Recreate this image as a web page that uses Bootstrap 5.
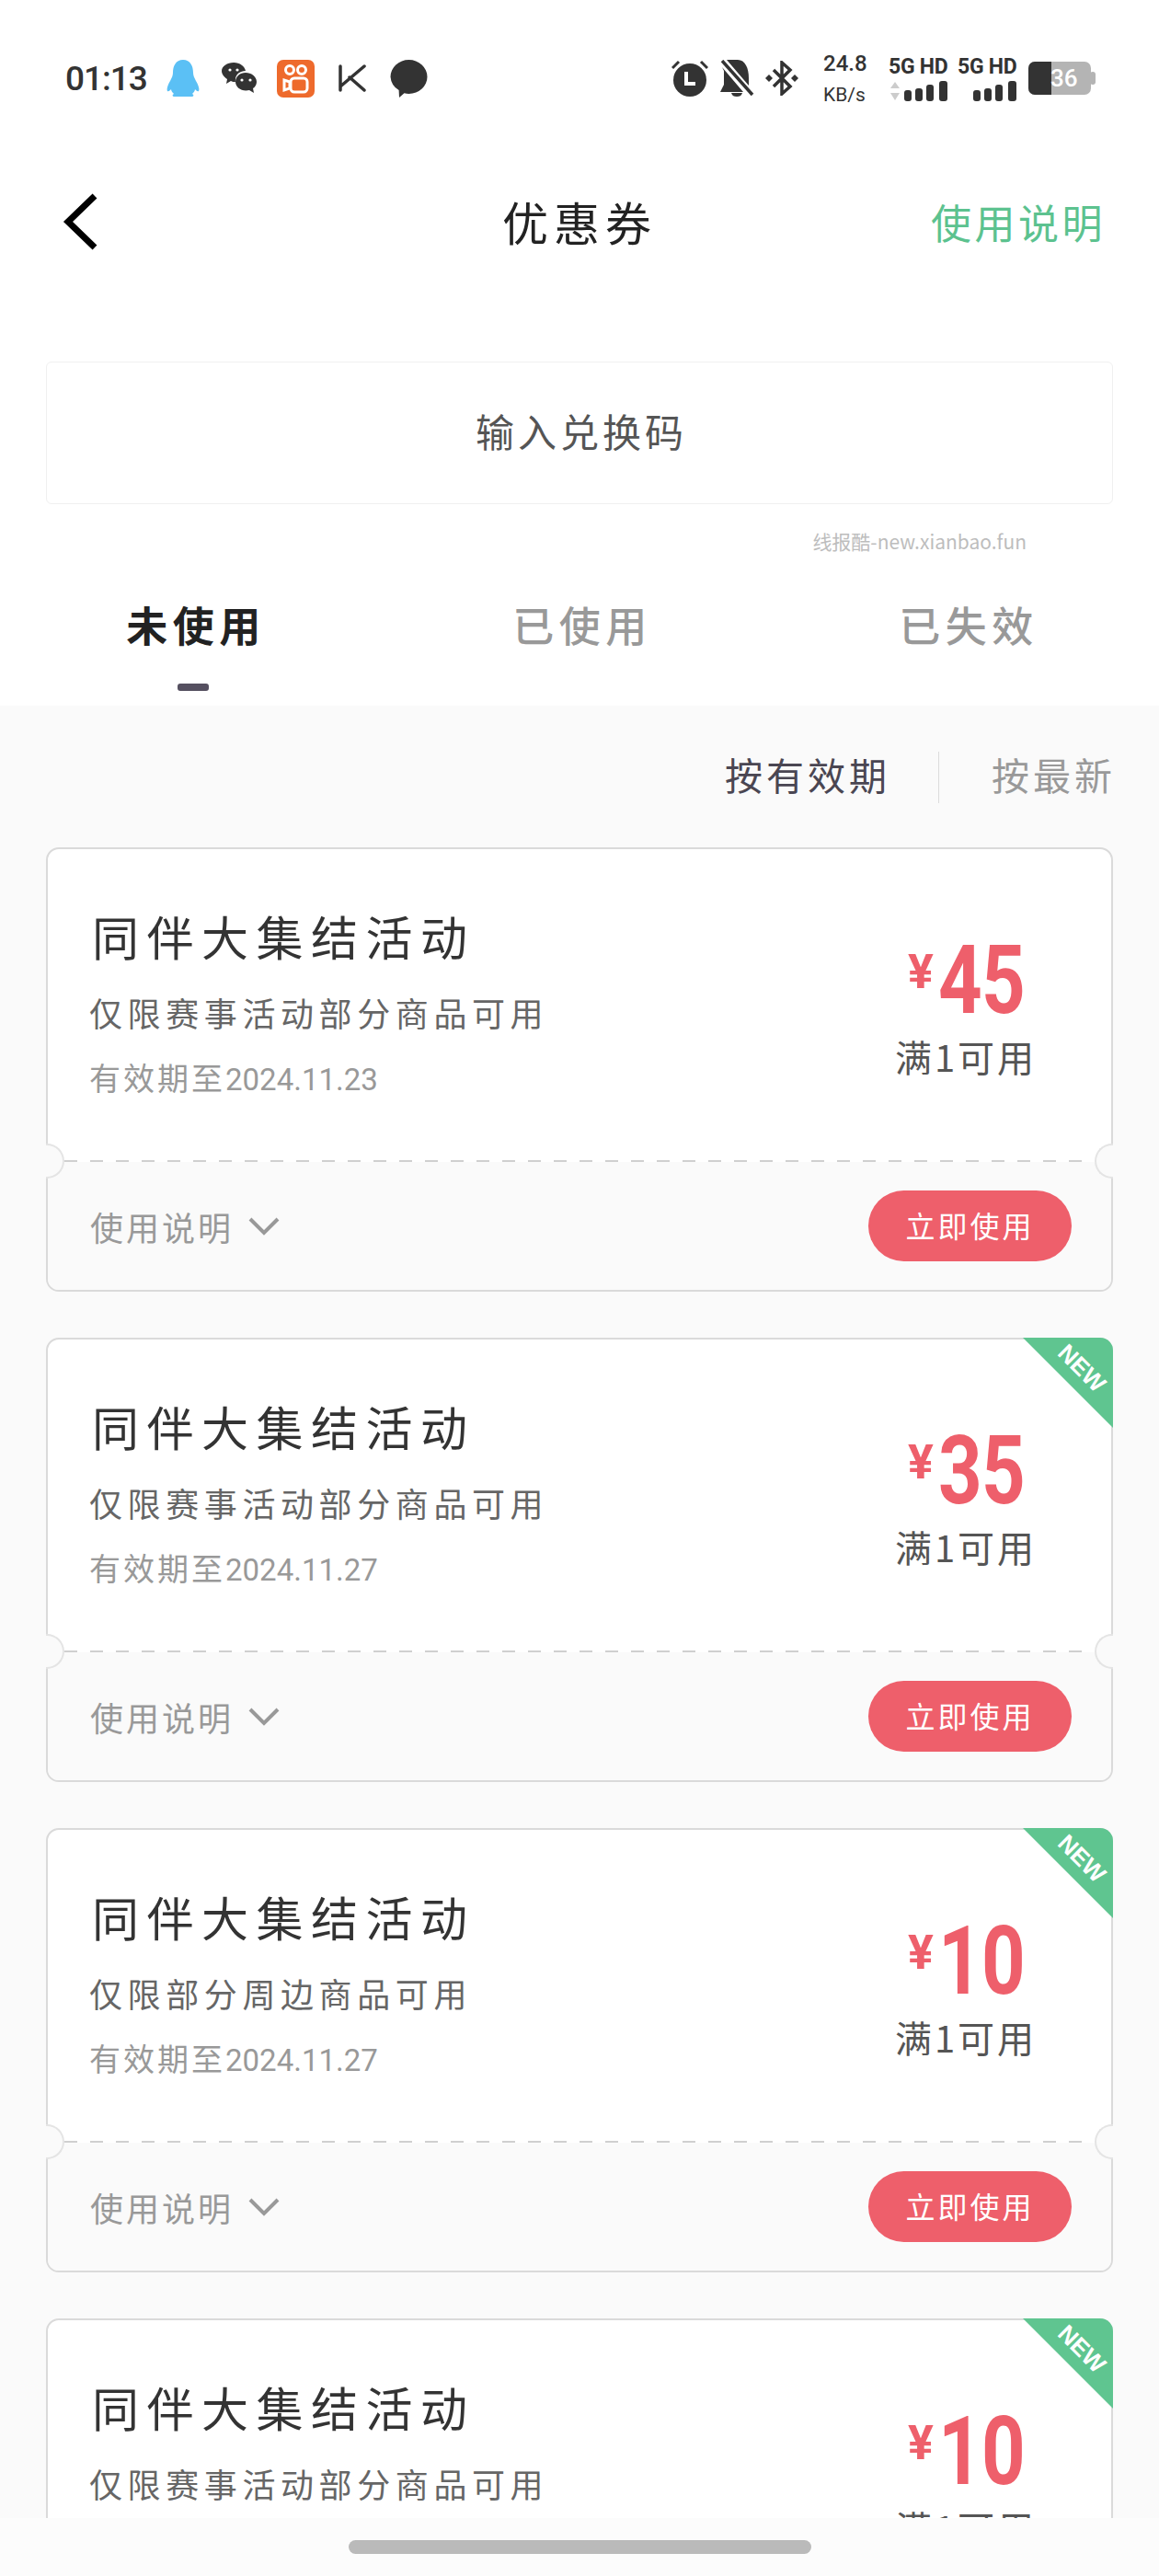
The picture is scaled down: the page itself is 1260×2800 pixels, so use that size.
<!DOCTYPE html>
<html lang="zh-CN">

<head>
    <meta charset="UTF-8">
    <meta name="viewport" content="width=device-width, initial-scale=1.0">
    <title>优惠券</title>
    <link href="https://cdn.jsdelivr.net/npm/bootstrap@5.3.3/dist/css/bootstrap.min.css" rel="stylesheet">
    <style>
        body {
            width: 1260px;
            height: 2800px;
            overflow: hidden;
            background: #fff;
            font-family: "Noto Sans CJK SC", "Noto Sans", sans-serif;
            color: #333;
        }

        /* status bar */
        .status-bar { height: 170px; padding: 0 69px 0 71px; color: #333; }
        .status-time { font: 500 37px/1 Roboto, sans-serif; letter-spacing: -1px; width: 110px; }
        .speed { width: 50px; font-family: Roboto, sans-serif; line-height: 1; }
        .speed-num { font-size: 24px; font-weight: 500; }
        .speed-unit { font-size: 21px; margin-top: 12px; }
        .net { width: 65px; margin-right: 10px; }
        .net-label { font: 700 23px/1 Roboto, sans-serif; white-space: nowrap; letter-spacing: -.3px; }
        .battery { position: relative; width: 73px; height: 36px; }
        .battery-num { position: absolute; left: 24px; top: 4px; color: #fff; font: 500 26px/28px Roboto, sans-serif; }

        /* header */
        .top-nav { height: 120px; margin-top: 13px; padding: 0 58px 4px 68px; position: relative; }
        .nav-title { position: absolute; left: 0; right: 0; top: 27px; text-align: center; font-size: 50px; line-height: 60px; letter-spacing: 6px; color: #222; }
        .nav-help { font-size: 44px; letter-spacing: 3.500px; color: #5cc28f; }

        .code-box { height: 155px; margin: 90px 50px 0; padding: 0 0 6px 4px; border: 1px solid #f0f0f0; border-radius: 6px; font-size: 42px; letter-spacing: 4px; color: #555; }
        .watermark { margin: 25px 144px 0 0; text-align: right; font-size: 21px; line-height: 30px; color: #bdbdbd; }

        .tabs-row { margin-top: 46px; padding-bottom: 16px; }
        .tab-item { padding-left: 6px; font-size: 45px; line-height: 60px; letter-spacing: 5.500px; font-weight: 500; color: #999; }
        .tab-active { color: #222; font-weight: 700; }
        .tab-bar { width: 34px; height: 8px; margin: 34px auto 0; border-radius: 3px; background: #555060; }

        /* list */
        .list-area { height: 1970px; overflow: hidden; background: #fafafa; padding: 50px 50px 0; }
        .sort-row { height: 56px; margin-bottom: 48px; font-size: 41px; letter-spacing: 4px; }
        .sort-row span { position: relative; top: -3px; }
        .sort-on { color: #4a4652; }
        .sort-off { color: #999; margin-right: -3px; }
        .sort-row .sort-line { top: 0; width: 1px; height: 56px; margin: 0 57px 0 52px; background: #dcdcdc; }

        .coupon { position: relative; height: 483px; margin-bottom: 50px; background: #fff; border: 2px solid #dadada; border-radius: 14px; }
        .coupon-top { height: 340px; padding-right: 33px; }
        .coupon-info { padding: 64px 0 0 48px; }
        .coupon-name { font-size: 51px; line-height: 60px; letter-spacing: 8.500px; color: #333; }
        .coupon-scope { margin: 28px 0 0 -3px; font-size: 36px; line-height: 50px; letter-spacing: 5.600px; color: #666; }
        .coupon-date { margin: 21px 0 0 -3px; font-size: 34px; line-height: 50px; letter-spacing: 3px; color: #999; }
        .coupon-date b { font: 400 33px/50px Roboto, sans-serif; letter-spacing: 0; }
        .coupon-price { width: 250px; padding-top: 98px; text-align: center; }
        .price-num { font: 700 52px/90px Roboto, sans-serif; color: #ee5f6b; }
        .price-sign { position: relative; top: -27px; margin-right: 5px; }
        /* the digits in the picture are tall and narrow */
        .price-digits { display: inline-block; margin-right: -24px; font-size: 104px; letter-spacing: -1px; transform: scaleX(.8); transform-origin: left center; }
        .price-cond { margin-top: -6px; font-size: 40px; line-height: 50px; letter-spacing: 3px; color: #555; }
        .coupon-foot {
            height: 139px;
            padding: 0 43px 0 46px;
            border-radius: 0 0 12px 12px;
            background: #fafafa;
            font-size: 36px;
            letter-spacing: 3px;
            color: #999;
            position: relative;
        }
        .coupon-foot::before {
            content: "";
            position: absolute;
            left: 18px;
            right: 18px;
            top: -2px;
            height: 2px;
            background: repeating-linear-gradient(90deg, #d0d0d0 0 14px, transparent 14px 28px);
        }
        /* half circles that bite into the card edge */
        .notch { position: absolute; z-index: 2; top: 320px; width: 20px; height: 38px; background: #fafafa; border: 2px solid #e4e4e4; }
        .notch-l { left: -2px; border-left: 0; border-radius: 0 19px 19px 0; }
        .notch-r { right: -2px; border-right: 0; border-radius: 19px 0 0 19px; }
        .use-btn { width: 221px; height: 77px; padding: 0 0 3px; border: 0; border-radius: 39px; background: #ee5f6b; color: #fff; font-size: 32px; letter-spacing: 3px; }
        .use-btn:hover { background: #ee5f6b; color: #fff; }
        .ribbon { position: absolute; top: -2px; right: -2px; width: 98px; height: 98px; border-top-right-radius: 14px; background: #5fc590; clip-path: polygon(0 0, 100% 0, 100% 100%); }
        .ribbon span { position: absolute; left: 34px; top: 20px; font: 700 26px/1 "Liberation Sans", sans-serif; color: #fff; transform: rotate(45deg); }

        .gesture-area { height: 63px; background: #fcfcfc; padding-top: 24px; }
        .gesture-pill { width: 503px; height: 15px; margin: 0 auto; border-radius: 8px; background: #bababa; }
    </style>
</head>

<body>
    <div class="status-bar d-flex align-items-center">
        <div class="status-time">01:13</div>
        <svg width="36" height="40" viewBox="0 0 36 40" class="me-4"><path fill="#5bc0f5" d="M18 0c8 0 11 7 11 14 0 3 1 5 3 9 3 5 4 9 3 11-1 1-3-1-4-2 0 2-2 4-3 5 2 1 2 3-1 3H9c-3 0-3-2-1-3-1-1-3-3-3-5-1 1-3 3-4 2-1-2 0-6 3-11 2-4 3-6 3-9C7 7 10 0 18 0z"/></svg>
        <svg width="38" height="34" viewBox="0 0 38 34" style="margin-right:22px"><path fill="#333" d="M13 0c7 0 12 4 13 9-6 0-12 4-11 12-1 0-4 0-5-1l-5 3 1-5C3 16 0 13 0 9 0 4 6 0 13 0z"/><path fill="#333" d="M26 11c6 0 12 4 12 10 0 3-2 6-4 7l1 5-5-3c-8 2-15-3-15-9s5-10 11-10z"/><circle cx="9" cy="8" r="1.600" fill="#fff"/><circle cx="17" cy="8" r="1.600" fill="#fff"/><circle cx="22" cy="19" r="1.600" fill="#fff"/><circle cx="31" cy="19" r="1.600" fill="#fff"/></svg>
        <svg width="41" height="41" viewBox="0 0 41 41" style="margin-right:26px"><rect width="41" height="41" rx="7" fill="#ee6a2c"/><g fill="none" stroke="#fff" stroke-width="3"><circle cx="14" cy="11" r="4.500"/><circle cx="27" cy="11" r="4.500"/><rect x="15" y="20" width="18" height="15" rx="4"/><path d="M14 24l-6-2v11l6-2z"/></g></svg>
        <svg width="30" height="30" viewBox="0 0 30 30" style="margin-right:26px"><path fill="none" stroke="#333" stroke-width="3.500" stroke-linecap="round" stroke-linejoin="round" d="M2 2v26M2 24L28 2M12 14l16 14"/></svg>
        <svg width="41" height="41" viewBox="0 0 41 41"><path fill="#333" d="M20.500 0a20 18.500 0 0 1 0 37 20 20 0 0 1-5-.7L10 41l-.4-8A19 18.500 0 0 1 .5 18.500 20 18.500 0 0 1 20.500 0z"/></svg>

        <div class="ms-auto d-flex align-items-center">
            <svg width="40" height="40" viewBox="0 0 40 40" style="margin-right:13px"><circle cx="20" cy="22" r="18" fill="#333"/><path d="M1 9l7-7M39 9l-7-7" stroke="#333" stroke-width="3"/><path d="M16 13v13h10" fill="none" stroke="#fff" stroke-width="4"/></svg>
            <svg width="37" height="40" viewBox="0 0 37 40" style="margin-right:12px"><path fill="#333" d="M7 0l24 28v-8c0-11-4-20-12-20-5 0-8 0-12 0zM2 8l23 27H0l4-8V12zM12 36h12c-1 3-3 4-6 4s-5-1-6-4z"/><path d="M2 1l33 37" stroke="#333" stroke-width="3.500"/></svg>
            <svg width="36" height="38" viewBox="0 0 36 38" style="margin-right:27px"><path fill="none" stroke="#333" stroke-width="3.500" d="M9 10l18 18-9 8V2l9 8-18 18"/><path fill="#333" d="M0 19l4-4 4 4-4 4zM28 19l4-4 4 4-4 4z"/></svg>
            <div class="speed" style="margin-right:21px">
                <div class="speed-num">24.8</div>
                <div class="speed-unit">KB/s</div>
            </div>
            <div class="net">
                <div class="net-label">5G HD</div>
                <svg width="65" height="22" viewBox="0 0 65 22" class="d-block mt-1"><path fill="#ccc" d="M2 8l5-7 5 7zM2 13l5 8 5-8z"/><g fill="#333"><rect x="17" y="10" width="8" height="12" rx="3"/><rect x="29" y="8" width="8" height="14" rx="3"/><rect x="41" y="4" width="8" height="18" rx="3"/><rect x="55" y="0" width="9" height="22" rx="3"/></g></svg>
            </div>
            <div class="net" style="margin-right:12px">
                <div class="net-label">5G HD</div>
                <svg width="65" height="22" viewBox="0 0 65 22" class="d-block mt-1"><g fill="#333"><rect x="17" y="10" width="8" height="12" rx="3"/><rect x="29" y="8" width="8" height="14" rx="3"/><rect x="41" y="4" width="8" height="18" rx="3"/><rect x="55" y="0" width="9" height="22" rx="3"/></g></svg>
            </div>
            <div class="battery">
                <svg width="73" height="36" viewBox="0 0 73 36" class="d-block"><rect x="67" y="11" width="6" height="14" rx="3" fill="#b4b4b4"/><rect width="68" height="36" rx="7" fill="#b4b4b4"/><path d="M7 0h18v36H7a7 7 0 0 1-7-7V7a7 7 0 0 1 7-7z" fill="#333"/></svg>
                <span class="battery-num">36</span>
            </div>
        </div>
    </div>

    <div class="top-nav d-flex align-items-center justify-content-between">
        <svg width="38" height="62" viewBox="0 0 38 62"><path fill="none" stroke="#000" stroke-width="7" d="M35 3L6 31l29 28"/></svg>
        <div class="nav-title">优惠券</div>
        <div class="nav-help">使用说明</div>
    </div>

    <div class="code-box d-flex align-items-center justify-content-center">输入兑换码</div>
    <div class="watermark">线报酷-new.xianbao.fun</div>

    <div class="row g-0 tabs-row text-center">
        <div class="col-4">
            <div class="tab-item tab-active">未使用</div>
            <div class="tab-bar"></div>
        </div>
        <div class="col-4"><div class="tab-item">已使用</div></div>
        <div class="col-4"><div class="tab-item">已失效</div></div>
    </div>

    <div class="list-area">
        <div class="sort-row d-flex align-items-center justify-content-end">
            <span class="sort-on">按有效期</span>
            <span class="sort-line"></span>
            <span class="sort-off">按最新</span>
        </div>

        <div class="coupon">
            <div class="coupon-top d-flex justify-content-between">
                <div class="coupon-info">
                    <div class="coupon-name">同伴大集结活动</div>
                    <div class="coupon-scope">仅限赛事活动部分商品可用</div>
                    <div class="coupon-date">有效期至<b>2024.11.23</b></div>
                </div>
                <div class="coupon-price">
                    <div class="price-num"><span class="price-sign">¥</span><span class="price-digits">45</span></div>
                    <div class="price-cond">满1可用</div>
                </div>
            </div>
            <span class="notch notch-l"></span><span class="notch notch-r"></span>
            <div class="coupon-foot d-flex align-items-center justify-content-between">
                <div class="d-flex align-items-center gap-3">使用说明
                    <svg width="34" height="22" viewBox="0 0 34 22"><path fill="none" stroke="#999" stroke-width="4" d="M2 3l15 15L32 3"/></svg>
                </div>
                <button class="btn use-btn">立即使用</button>
            </div>
        </div>

        <div class="coupon">
            <div class="ribbon"><span>NEW</span></div>
            <div class="coupon-top d-flex justify-content-between">
                <div class="coupon-info">
                    <div class="coupon-name">同伴大集结活动</div>
                    <div class="coupon-scope">仅限赛事活动部分商品可用</div>
                    <div class="coupon-date">有效期至<b>2024.11.27</b></div>
                </div>
                <div class="coupon-price">
                    <div class="price-num"><span class="price-sign">¥</span><span class="price-digits">35</span></div>
                    <div class="price-cond">满1可用</div>
                </div>
            </div>
            <span class="notch notch-l"></span><span class="notch notch-r"></span>
            <div class="coupon-foot d-flex align-items-center justify-content-between">
                <div class="d-flex align-items-center gap-3">使用说明
                    <svg width="34" height="22" viewBox="0 0 34 22"><path fill="none" stroke="#999" stroke-width="4" d="M2 3l15 15L32 3"/></svg>
                </div>
                <button class="btn use-btn">立即使用</button>
            </div>
        </div>

        <div class="coupon">
            <div class="ribbon"><span>NEW</span></div>
            <div class="coupon-top d-flex justify-content-between">
                <div class="coupon-info">
                    <div class="coupon-name">同伴大集结活动</div>
                    <div class="coupon-scope">仅限部分周边商品可用</div>
                    <div class="coupon-date">有效期至<b>2024.11.27</b></div>
                </div>
                <div class="coupon-price">
                    <div class="price-num"><span class="price-sign">¥</span><span class="price-digits">10</span></div>
                    <div class="price-cond">满1可用</div>
                </div>
            </div>
            <span class="notch notch-l"></span><span class="notch notch-r"></span>
            <div class="coupon-foot d-flex align-items-center justify-content-between">
                <div class="d-flex align-items-center gap-3">使用说明
                    <svg width="34" height="22" viewBox="0 0 34 22"><path fill="none" stroke="#999" stroke-width="4" d="M2 3l15 15L32 3"/></svg>
                </div>
                <button class="btn use-btn">立即使用</button>
            </div>
        </div>

        <div class="coupon">
            <div class="ribbon"><span>NEW</span></div>
            <div class="coupon-top d-flex justify-content-between">
                <div class="coupon-info">
                    <div class="coupon-name">同伴大集结活动</div>
                    <div class="coupon-scope">仅限赛事活动部分商品可用</div>
                </div>
                <div class="coupon-price">
                    <div class="price-num"><span class="price-sign">¥</span><span class="price-digits">10</span></div>
                    <div class="price-cond">满1可用</div>
                </div>
            </div>
        </div>
    </div>

    <div class="gesture-area">
        <div class="gesture-pill"></div>
    </div>

    <script src="https://cdn.jsdelivr.net/npm/bootstrap@5.3.3/dist/js/bootstrap.bundle.min.js"></script>
</body>

</html>
